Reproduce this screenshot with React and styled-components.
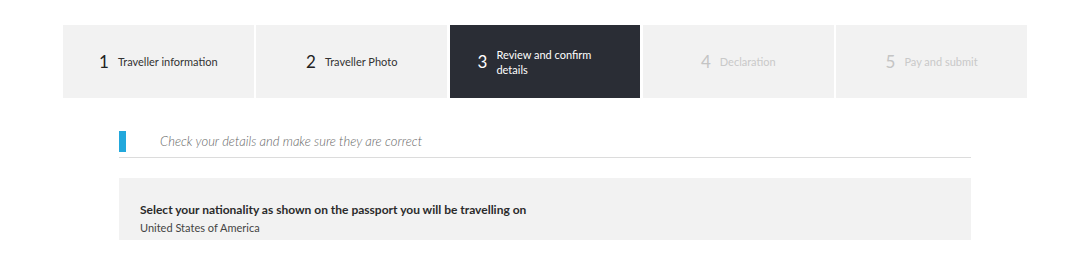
import React from "react";
import styled, { createGlobalStyle } from "styled-components";

const Global = createGlobalStyle`
  html, body { margin: 0; padding: 0; background: #fff; }
  body { font-family: Lato, "Open Sans", sans-serif; color: #333; }
`;

const Page = styled.div`
  width: 1072px;
  height: 261px;
  overflow: hidden;
  padding-top: 25px;
  box-sizing: border-box;
`;

const Stepper = styled.ol`
  list-style: none;
  margin: 0 0 0 63px;
  padding: 0;
  width: 964px;
  display: grid;
  grid-template-columns: repeat(5, 1fr);
  gap: 2.5px;
`;

const Step = styled.li`
  height: 73px;
  display: flex;
  align-items: center;
  justify-content: center;
  background: ${(p) => (p.$active ? "#2a2d35" : "#f2f2f2")};
  color: ${(p) => (p.$active ? "#fff" : p.$disabled ? "#c9c9c9" : "#333")};
  gap: 9px;
`;

const StepNum = styled.span`
  font-size: 17px;
  font-weight: 400;
  line-height: 1;
  color: ${(p) => (p.$active ? "#fff" : p.$disabled ? "#c4c4c4" : "#222")};
`;

const StepLabel = styled.span`
  font-size: 11px;
  line-height: 15px;
  width: ${(p) => (p.$wrap ? "116px" : "auto")};
`;

const Content = styled.div`
  margin: 0 0 0 119px;
  width: 852px;
  padding-top: 33px;
`;

const Heading = styled.div`
  display: flex;
  align-items: center;
  height: 21px;
  padding-bottom: 5px;
  border-bottom: 1px solid #dcdcdc;
`;

const Marker = styled.span`
  width: 7px;
  height: 21px;
  background: #22a8dc;
  margin-right: 34px;
`;

const HeadingText = styled.span`
  font-style: italic;
  font-weight: 300;
  font-size: 13px;
  color: #666;
  position: relative;
  top: -1px;
`;

const Panel = styled.div`
  margin-top: 20px;
  background: #f2f2f2;
  height: 62px;
  box-sizing: border-box;
  padding: 24px 21px 0;
`;

const Question = styled.div`
  font-weight: 700;
  font-size: 12px;
  line-height: 16px;
  color: #2b2b2b;
`;

const Answer = styled.div`
  font-size: 11px;
  line-height: 20px;
  color: #444;
`;

const steps = [
  { n: 1, label: "Traveller information" },
  { n: 2, label: "Traveller Photo" },
  { n: 3, label: "Review and confirm details", active: true },
  { n: 4, label: "Declaration", disabled: true },
  { n: 5, label: "Pay and submit", disabled: true },
];

export default function App() {
  return (
    <>
      <Global />
      <Page>
        <Stepper>
          {steps.map((s) => (
            <Step key={s.n} $active={s.active} $disabled={s.disabled}>
              <StepNum $active={s.active} $disabled={s.disabled}>{s.n}</StepNum>
              <StepLabel $wrap={s.active}>{s.label}</StepLabel>
            </Step>
          ))}
        </Stepper>
        <Content>
          <Heading>
            <Marker />
            <HeadingText>Check your details and make sure they are correct</HeadingText>
          </Heading>
          <Panel>
            <Question>Select your nationality as shown on the passport you will be travelling on</Question>
            <Answer>United States of America</Answer>
          </Panel>
        </Content>
      </Page>
    </>
  );
}
